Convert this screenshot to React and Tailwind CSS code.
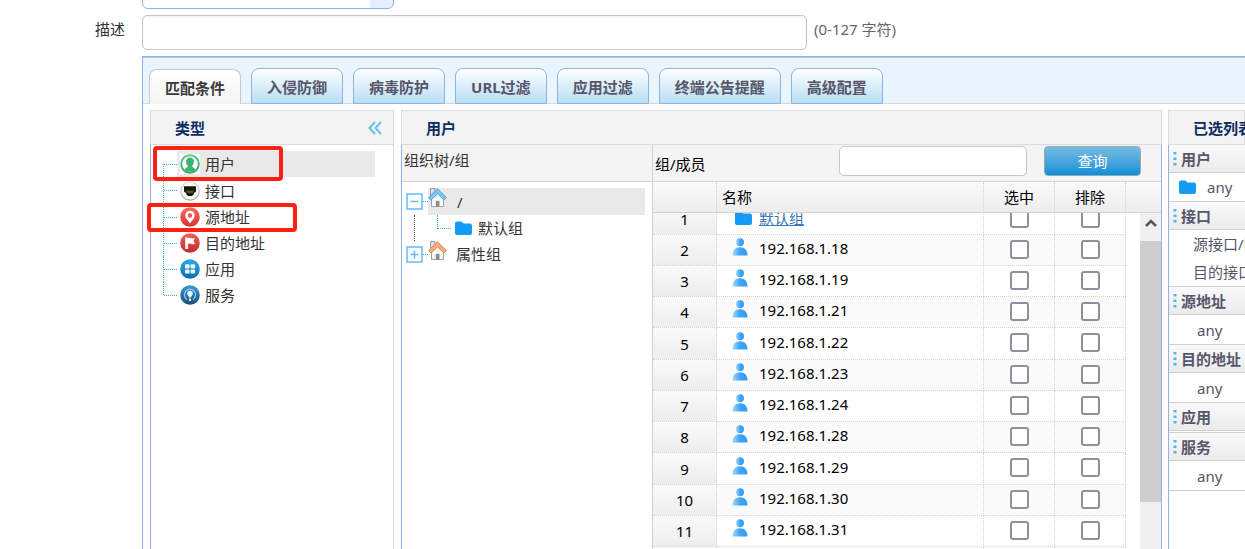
import { useState } from "react";

const tabs = ["匹配条件", "入侵防御", "病毒防护", "URL过滤", "应用过滤", "终端公告提醒", "高级配置"];

const types = [
  { name: "用户", icon: "user", mark: "-top-[5px] -left-[10px] w-[130px] h-[35px]" },
  { name: "接口", icon: "port" },
  { name: "源地址", icon: "pin", mark: "-top-px -left-4 w-[150px] h-[29px]" },
  { name: "目的地址", icon: "flag" },
  { name: "应用", icon: "apps" },
  { name: "服务", icon: "service" },
];

const members = [
  { name: "默认组", group: true },
  { name: "192.168.1.18" },
  { name: "192.168.1.19" },
  { name: "192.168.1.21" },
  { name: "192.168.1.22" },
  { name: "192.168.1.23" },
  { name: "192.168.1.24" },
  { name: "192.168.1.28" },
  { name: "192.168.1.29" },
  { name: "192.168.1.30" },
  { name: "192.168.1.31" },
  { name: "192.168.1.32" },
];

const discColors = {
  user: ["#5cc98a", "#2fa866"],
  port: ["#e2e2e0", "#a9a9a6"],
  pin: ["#ff6a62", "#d83430"],
  flag: ["#f0605c", "#c32a28"],
  apps: ["#2fa9e6", "#0f6cab"],
  service: ["#3a9ad4", "#154f78"],
};

function TypeIcon({ name }) {
  const [from, to] = discColors[name];
  return (
    <svg viewBox="0 0 20 20" className="w-5 h-5 shrink-0" aria-hidden="true">
      <defs>
        <linearGradient id={`disc-${name}`} x1="0" y1="0" x2="0" y2="1">
          <stop offset="0" stopColor={from} />
          <stop offset="1" stopColor={to} />
        </linearGradient>
      </defs>
      {name === "user" && <rect width="20" height="20" fill="#fff" />}
      <circle cx="10" cy="10" r="9.8" fill={`url(#disc-${name})`} />
      {name === "user" && (
        <>
          <circle cx="10" cy="10" r="7.8" fill="#fff" />
          <path
            d="M10 3.5c2.500 0 3.900 1.700 3.900 4.200 0 1.700-.7 3-1.700 3.900v1.500l2.600 1.100a7.500 7.500 0 0 1-9.600 0l2.600-1.100v-1.500c-1-.9-1.700-2.200-1.700-3.900 0-2.500 1.400-4.200 3.900-4.200z"
            fill="#3fb273"
          />
          <path d="M4.500 15.200l3-1.800h5l3 1.800-2.500 2.600H7z" fill="#3fb273" />
        </>
      )}
      {name === "port" && (
        <>
          <circle cx="10" cy="10" r="8.600" fill="#f8f8f7" />
          <path d="M4 5.200h12v5.300l-2.300 1.700v1.300L12 15H8l-1.700-1.500v-1.300L4 10.500z" fill="#14130d" />
          <path d="M5.500 9.500h9l-2.200 2.800H7.700z" fill="#5a5126" />
        </>
      )}
      {name === "pin" && (
        <path
          fillRule="evenodd"
          d="M10 3.700a4.700 4.700 0 0 1 4.700 4.700c0 3-3.200 5.300-4.700 8.100-1.500-2.800-4.700-5.100-4.700-8.100A4.700 4.700 0 0 1 10 3.700zm0 2.600a2.200 2.200 0 1 0 0 4.400 2.200 2.200 0 0 0 0-4.400z"
          fill="#fff"
        />
      )}
      {name === "flag" && (
        <path d="M5.200 4.300h1.500v.9c2.500-1.200 4.200 1 8.300-.1l-1.500 2.900 1.500 3c-3.700.9-5.300-1-6.900-.2V16H5.200z" fill="#fff" />
      )}
      {name === "apps" && (
        <g fill="#e9f7ff">
          <rect x="5" y="5.300" width="4.600" height="4.200" rx="1" />
          <rect x="10.500" y="5.300" width="4.600" height="4.200" rx="1" />
          <rect x="5" y="10.400" width="4.600" height="4.200" rx="1" />
          <rect x="10.500" y="10.400" width="4.600" height="4.200" rx="1" />
        </g>
      )}
      {name === "service" && (
        <>
          <path d="M7 14.500A5.600 5.600 0 1 1 13 14.500" fill="none" stroke="#8fcbee" strokeWidth="1.300" />
          <path d="M10 5.800a2.800 2.800 0 0 1 2.800 2.800c0 1.800-1.600 2.300-1.800 3.900H9c-.2-1.600-1.800-2.100-1.800-3.900A2.800 2.800 0 0 1 10 5.800zM9 13.500h2V16H9z" fill="#e4f5ff" />
        </>
      )}
    </svg>
  );
}

function FolderIcon() {
  return (
    <svg viewBox="0 0 17 15" className="w-[17px] h-[15px] shrink-0" aria-hidden="true">
      <path d="M0 2.500Q0 .5 2 .5h4.500l2 2H15q2 0 2 2V12q0 2-2 2H2q-2 0-2-2z" fill="#149cf5" />
    </svg>
  );
}

function PersonIcon() {
  return (
    <svg viewBox="0 0 16 18" className="w-4 h-[18px] shrink-0 self-start" aria-hidden="true">
      <defs>
        <linearGradient id="person" x1="0" y1="0" x2="1" y2="0">
          <stop offset="0" stopColor="#a8d6fc" />
          <stop offset="0.500" stopColor="#3fa5f7" />
          <stop offset="1" stopColor="#2e9cf8" />
        </linearGradient>
      </defs>
      <circle cx="8" cy="4.300" r="4" fill="url(#person)" />
      <path d="M.5 17.500c0-5 2.500-8.300 7.500-8.300s7.500 3.300 7.500 8.300z" fill="url(#person)" />
    </svg>
  );
}

function HomeIcon({ roof, edge }) {
  return (
    <svg viewBox="0 0 20 20" className="w-5 h-5 shrink-0" aria-hidden="true">
      <path d="M2.500.5h4.500v8H2.500z" fill="#dedede" stroke="#9d9d9d" />
      <path d="M3.500 10.500 9.500 5l6 5.500v8h-12z" fill="#fbfbfb" stroke="#a0a0a0" />
      <path d="M7.800 12.800h3.700v5.700H7.800z" fill="#8c8c8c" />
      <path d="M9.500.8.6 9.600l2.500 2.400 6.400-6.200 6.400 6.200 2.500-2.400z" fill={roof} stroke={edge} />
    </svg>
  );
}

function Expander({ open, onClick }) {
  return (
    <button onClick={onClick} aria-label={open ? "收起" : "展开"} className="w-[17px] h-[17px] shrink-0 bg-white">
      <svg viewBox="0 0 17 17" className="w-[17px] h-[17px]">
        <path d="M1 1h15v15H1z" fill="none" stroke="#62bdf5" strokeWidth="1.500" />
        <path d={open ? "M4.500 8.500h8" : "M4.500 8.500h8M8.500 4.500v8"} stroke="#62bdf5" strokeWidth="1.500" />
      </svg>
    </button>
  );
}

function PanelHeader({ title, children }) {
  return (
    <div className="h-[35px] shrink-0 flex items-center justify-between border border-[#dcdcdc] bg-[#f3f3f3] pl-6 pr-[11px]">
      <h2 className="font-bold text-[#0c2c62] whitespace-nowrap">{title}</h2>
      {children}
    </div>
  );
}

function Section({ title, children }) {
  return (
    <section>
      <h3 className="h-7 flex items-center gap-1 pl-1 border-b border-[#d0d0d0] bg-linear-to-b from-[#f9f9f9] to-[#ebebeb] font-bold">
        <svg viewBox="0 0 4 14" className="w-1 h-[14px] shrink-0" aria-hidden="true">
          <path d="M.5 0h3v2.500h-3zM.5 5.500h3V8h-3zM.5 11h3v2.500h-3z" fill="#58b4e6" />
        </svg>
        {title}
      </h3>
      <div className="border-b border-[#d0d0d0]">{children}</div>
    </section>
  );
}

function Columns() {
  return (
    <colgroup>
      <col className="w-16" />
      <col />
      <col className="w-[71px]" />
      <col className="w-[71px]" />
    </colgroup>
  );
}

export default function App() {
  const [tab, setTab] = useState(tabs[0]);
  const [type, setType] = useState("用户");
  const [rootOpen, setRootOpen] = useState(true);
  const [desc, setDesc] = useState("");
  const [keyword, setKeyword] = useState("");

  return (
    <div className="h-screen overflow-hidden flex flex-col bg-white text-[15px] leading-5 text-[#333] whitespace-nowrap font-['Noto_Sans','Noto_Sans_CJK_SC',sans-serif]">
      {/* Form */}
      <div className="h-[9px] shrink-0 overflow-hidden flex items-end pl-[142px]">
        <select
          aria-label="选项"
          className="w-[252px] h-8 shrink-0 appearance-none rounded-[6px] border border-[#8fb3e6] bg-linear-to-r from-white from-[91%] to-[#e4eeff] to-[91%]"
        />
      </div>
      <div className="shrink-0 flex items-start mt-[6px] mb-[6px]">
        <label htmlFor="desc" className="w-[142px] pr-[17px] pt-1 text-right">
          描述
        </label>
        <input
          id="desc"
          value={desc}
          onChange={(e) => setDesc(e.target.value)}
          className="w-[665px] h-[35px] px-2 rounded-[5px] border border-[#c6c6c6] bg-white shadow-[inset_0_1px_2px_#eee]"
        />
        <span className="pl-[7px] pt-1 text-[#666]">(0-127 字符)</span>
      </div>

      <div className="flex-1 min-h-0 flex flex-col ml-[142px] border-t border-l border-[#8fb3e6]">
        {/* Tabs */}
        <div className="h-[47px] shrink-0 flex items-end gap-[10px] pl-[6px] border-t border-[#b9c8dc] bg-[#e8f5ff] shadow-[inset_0_-1px_0_#d6d6d6]">
          {tabs.map((name) => (
            <button
              key={name}
              onClick={() => setTab(name)}
              className={`px-[15px] pt-[2px] border rounded-t-[8px] font-bold ${
                tab === name
                  ? "h-[35px] border-[#c8c8c8] border-b-0 bg-linear-to-b from-white to-[#f3f3f3] text-[#3a3a3a]"
                  : "h-9 border-[#8fb3e6] bg-linear-to-b from-white to-[#b7ddf5] text-[#56566a]"
              }`}
            >
              {name}
            </button>
          ))}
        </div>

        <div className="flex-1 min-h-0 flex pt-[6px] pl-[7px]">
          {/* Types */}
          <div className="w-[244px] shrink-0 flex flex-col">
            <PanelHeader title="类型">
              <button aria-label="收起面板">
                <svg viewBox="0 0 14 14" className="w-[14px] h-[14px]" fill="none" stroke="#6fbdee" strokeWidth="2">
                  <path d="M7 1 1.500 7 7 13M13 1 7.500 7 13 13" />
                </svg>
              </button>
            </PanelHeader>
            <div className="flex-1 border-l border-r border-l-[#8fb3e6] border-r-[#dcdcdc] pt-[6px] pl-3 pr-[18px]">
              {types.map((item, i) => (
                <div key={item.name} className="relative h-[26px] nth-2:h-[27px] flex">
                  <div className={`w-px border-l border-dotted border-[#3daaf0] ${i === 0 ? "mt-[13px]" : ""} ${i === types.length - 1 ? "mb-[13px]" : ""}`} />
                  <div className="w-[13px] h-[14px] border-b border-dotted border-[#3daaf0]" />
                  <button
                    onClick={() => setType(item.name)}
                    className={`flex-1 flex items-center gap-[5px] pl-[3px] ${type === item.name ? "bg-[#e9e9e9]" : ""}`}
                  >
                    <TypeIcon name={item.icon} />
                    {item.name}
                  </button>
                  {item.mark && (
                    <div className={`absolute z-10 pointer-events-none rounded-[4px] border-4 border-[#fe2010] ${item.mark}`} />
                  )}
                </div>
              ))}
            </div>
          </div>

          {/* Users */}
          <div className="flex-1 min-w-0 flex flex-col ml-[7px]">
            <PanelHeader title="用户" />
            <div className="flex-1 min-h-0 flex border-l border-r border-[#8fb3e6]">
              <div className="w-[251px] shrink-0 border-r border-[#cfcfcf]">
                <div className="h-[37px] pt-[5px] pl-[2px] border-b border-[#d0d0d0] bg-[#f4f4f4]">组织树/组</div>
                <div className="pt-[6px] pl-1 pr-[7px]">
                  <div className="h-[27px] flex items-center">
                    <Expander open={rootOpen} onClick={() => setRootOpen(!rootOpen)} />
                    <div className="w-[5px] border-b border-dotted border-[#3daaf0]" />
                    <div className="flex-1 h-full flex bg-[#e9e9e9]">
                      <HomeIcon roof="#7cc8f2" edge="#4ea6dc" />
                      <span className="pl-[9px] pt-1">/</span>
                    </div>
                  </div>
                  {rootOpen && (
                    <div className="h-[26px] flex items-center">
                      <div className="w-[9px] h-full border-r border-dotted border-[#4c4c4c]" />
                      <div className="w-[22px]" />
                      <div className="w-[14px] h-[14px] self-start border-l border-b border-dotted border-[#3daaf0] mr-1" />
                      <FolderIcon />
                      <span className="pl-[6px]">默认组</span>
                    </div>
                  )}
                  <div className="h-[26px] flex items-center">
                    <Expander open={false} />
                    <div className="w-[5px] border-b border-dotted border-[#3daaf0]" />
                    <div className="flex-1 h-full flex">
                      <HomeIcon roof="#f9ad7c" edge="#e5854d" />
                      <span className="pl-2 pt-[3px]">属性组</span>
                    </div>
                  </div>
                </div>
              </div>

              <div className="flex-1 min-w-0 flex flex-col text-black">
                <div className="h-[37px] shrink-0 flex items-start pt-px pl-[2px] pr-5 border-b border-[#d6d6d6] bg-[#f4f4f4]">
                  <label htmlFor="keyword" className="pt-[8px] mr-auto">
                    组/成员
                  </label>
                  <input
                    id="keyword"
                    value={keyword}
                    onChange={(e) => setKeyword(e.target.value)}
                    className="w-[188px] h-[30px] px-2 rounded-[5px] border border-[#c6c6c6] bg-white"
                  />
                  <button className="w-[97px] h-[30px] ml-[17px] rounded-[4px] border border-[#9aa8b0] bg-linear-to-b from-[#74bce2] to-[#058fd8] text-white">
                    查询
                  </button>
                </div>
                <div className="h-[31px] shrink-0 pr-[35px] border-b border-[#d0d0d0] bg-linear-to-b from-[#fafafa] to-[#ededed]">
                  <table className="w-full table-fixed border-separate border-spacing-0">
                    <Columns />
                    <thead>
                      <tr className="h-[30px] [&>th]:border-r [&>th]:border-dotted [&>th]:border-[#d0d0d0] [&>th]:p-0 [&>th]:font-normal">
                        <th aria-label="序号" />
                        <th className="text-left">
                          <span className="pl-[5px]">名称</span>
                        </th>
                        <th>选中</th>
                        <th>排除</th>
                      </tr>
                    </thead>
                  </table>
                </div>
                <div className="flex-1 min-h-0 flex overflow-hidden">
                  <div className="flex-1 -mt-[9px] mr-[14px]">
                    <table className="w-full table-fixed border-separate border-spacing-0">
                      <Columns />
                      <tbody>
                        {members.map((m, i) => (
                          <tr
                            key={m.name}
                            className="h-[31px] nth-[4n+5]:h-8 even:bg-[#fafafa] [&>td]:border-r [&>td]:border-b [&>td]:border-dotted [&>td]:border-[#d4d4d4] [&>td]:p-0"
                          >
                            <td className="text-center bg-linear-to-b from-[#fafafa] to-[#ededed]">{i + 1}</td>
                            <td>
                              <div className={`flex items-center ${m.group ? "pl-[18px] gap-[7px] pb-[2px]" : "pl-[15px] gap-[11px] pb-1"}`}>
                                {m.group ? <FolderIcon /> : <PersonIcon />}
                                {m.group ? (
                                  <a href="#group" className="text-[#3a75b8] underline">
                                    {m.name}
                                  </a>
                                ) : (
                                  <span>{m.name}</span>
                                )}
                              </div>
                            </td>
                            {["选中", "排除"].map((action) => (
                              <td key={action}>
                                <input
                                  type="checkbox"
                                  aria-label={`${action} ${m.name}`}
                                  className="block mx-auto mb-[2px] w-[19px] h-[19px] appearance-none rounded-[3px] border-2 border-[#8f8f9d] bg-white checked:bg-[#058fd8]"
                                />
                              </td>
                            ))}
                          </tr>
                        ))}
                      </tbody>
                    </table>
                  </div>
                  <div className="w-[21px] bg-[#f0f0f0]">
                    <div className="h-7 flex items-center justify-center pb-2">
                      <svg viewBox="0 0 12 8" className="w-3 h-2" fill="none" stroke="#555" strokeWidth="2.500">
                        <path d="M1 7l5-5 5 5" />
                      </svg>
                    </div>
                    <div className="h-[261px] bg-[#cdcdcd]" />
                  </div>
                </div>
              </div>
            </div>
          </div>

          {/* Selected */}
          <div className="w-[77px] shrink-0 flex flex-col ml-[6px] overflow-hidden">
            <PanelHeader title="已选列表" />
            <div className="flex-1 border-l border-[#8fb3e6] text-[#56566a]">
              <Section title="用户">
                <div className="h-7 flex items-center gap-[11px] pl-[10px]">
                  <FolderIcon />
                  any
                </div>
              </Section>
              <Section title="接口">
                <div className="h-7 pl-6 pt-1">源接口/区域</div>
                <div className="h-7 pl-6 pt-1">目的接口/区域</div>
              </Section>
              <Section title="源地址">
                <div className="h-[29px] pl-7 pt-[5px]">any</div>
              </Section>
              <Section title="目的地址">
                <div className="h-[29px] pl-7 pt-[5px]">any</div>
              </Section>
              <Section title="应用">
                <div className="h-px" />
              </Section>
              <Section title="服务">
                <div className="h-[29px] pl-7 pt-[5px]">any</div>
              </Section>
            </div>
          </div>
        </div>
      </div>
    </div>
  );
}
